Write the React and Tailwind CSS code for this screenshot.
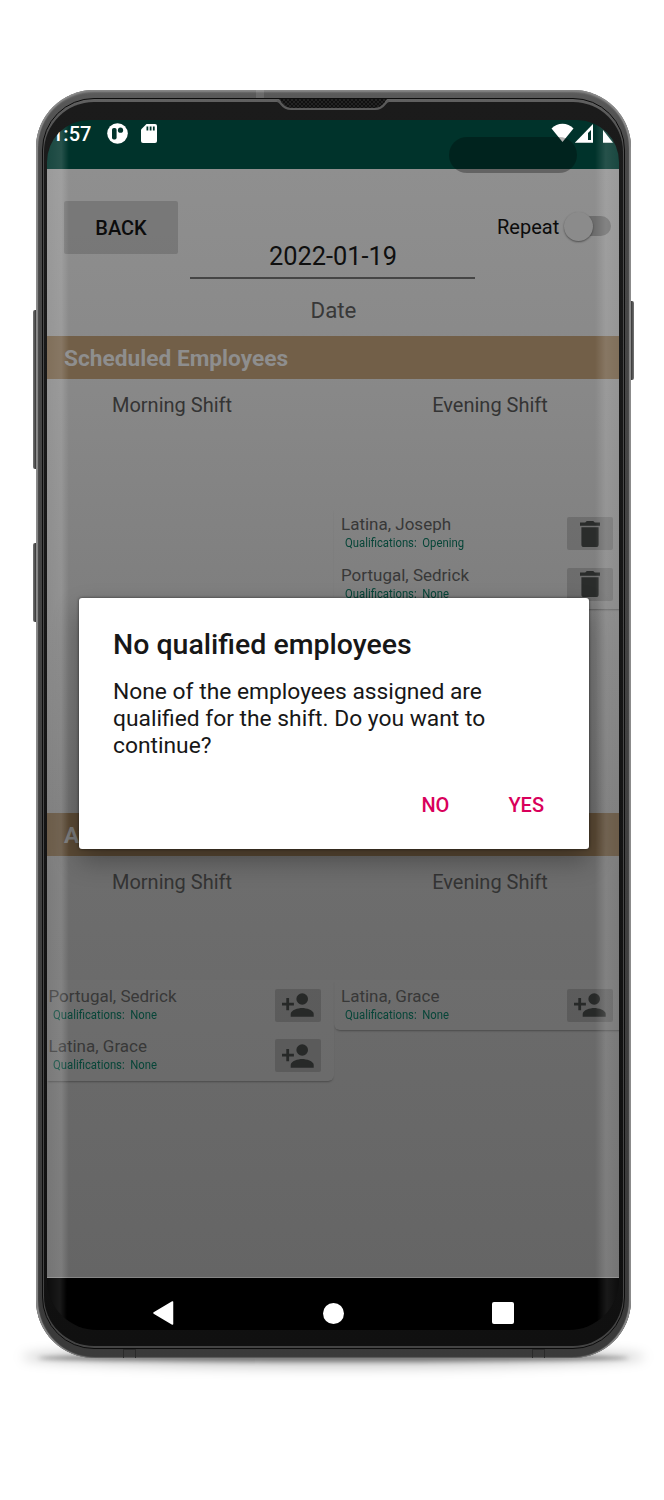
import React from "react";

function TrashIcon() {
  return (
    <svg viewBox="0 0 20 26" className="h-[26px] w-5" fill="#2a2c2b">
      <path d="M0 1.6h5.2L6.8 0h6.4l1.6 1.6H20v3.1H0zM1.4 6.2h17.2v17.2a2.6 2.6 0 0 1-2.6 2.6H4a2.6 2.6 0 0 1-2.6-2.6z" />
    </svg>
  );
}

function AddPersonIcon() {
  return (
    <svg viewBox="0 0 32 24" className="h-6 w-8" fill="#272928">
      <path d="M4.3 4.9h2.8v4.8h4.8v2.8H7.1v4.8H4.3v-4.8H0V9.700h4.300z" />
      <circle cx="20.200" cy="6" r="5.800" />
      <path d="M8.700 23.700v-2.800c0-4 7.600-6 11.500-6s11.500 2 11.500 6v2.800z" />
    </svg>
  );
}

function Employee({ name, qualification, kind }) {
  return (
    <div className="flex h-[50.7px] items-start justify-between">
      <div className="pt-[6px]">
        <div className="h-[21px] text-[17px] leading-[21px] text-[#383838]">{name}</div>
        <div className="ml-1 origin-left scale-x-[0.942] text-[12px] leading-4 whitespace-pre text-[#064538]">{"Qualifications:  " + qualification}</div>
      </div>
      <div className="mt-[9px] flex h-[33px] w-[46px] items-center justify-center rounded-[2px] bg-black/15">
        {kind === "trash" ? <TrashIcon /> : <AddPersonIcon />}
      </div>
    </div>
  );
}

function Banner({ children, dim }) {
  return (
    <div className={"flex h-[43px] items-center pl-[17px] text-[22.7px] leading-[43px] font-bold " + (dim ? "bg-[#5b4a35] text-[#7b7b7b]" : "bg-[#725f48] text-[#8e8e8e]")}>
      <span className="pt-[2px]">{children}</span>
    </div>
  );
}

function ShiftTitles() {
  return (
    <div className="flex h-[52px] text-center text-[20px] leading-[52px] text-[#343434]">
      <div className="w-[250px]">Morning Shift</div>
      <div className="ml-[68px] w-[250px]">Evening Shift</div>
    </div>
  );
}

function StatusBar() {
  return (
    <div className="flex h-[49px] items-start bg-[#00332b] text-white">
      <span className="ml-[5px] mt-[2px] w-[55px] text-[20px] leading-6 font-medium">1:57</span>
      <svg viewBox="0 0 21 21" className="mt-[3px] h-[21px] w-[21px]">
        <circle cx="10.500" cy="10.500" r="10.300" fill="#fff" />
        <rect x="5" y="5" width="4.600" height="11.500" rx="1.800" fill="#00332b" />
        <circle cx="13.500" cy="7.200" r="2.600" fill="#00332b" />
      </svg>
      <svg viewBox="0 0 16 19" className="ml-[13px] mt-[4px] h-[19px] w-4">
        <path d="M5.500 0H14a2 2 0 0 1 2 2v15a2 2 0 0 1-2 2H2a2 2 0 0 1-2-2V5.500z" fill="#fff" />
        <path d="M5.500 2.500h1.800v4H5.500zM8.700 2.500h1.800v4H8.700zM11.900 2.500h1.800v4h-1.800z" fill="#00332b" />
      </svg>
      <svg viewBox="0 0 68 20" className="ml-auto h-5 w-[68px] mt-[3px]">
        <path d="M0.500 5.500C6-0.800 17-0.800 22.500 5.500L11.500 19z" fill="#fff" />
        <path d="M23.800 19.800 42 1v18.800z" fill="#fff" />
        <path d="M37 10l3-3v10h-3z" fill="#00332b" />
        <path d="M52 7l10 12.800H52z" fill="#fff" />
      </svg>
    </div>
  );
}

function ScheduleHeader() {
  return (
    <div className="flex h-[167px] items-start pl-[17px]">
      <button className="mt-8 h-[53px] w-[114px] rounded-[2px] bg-black/15 text-[20px] font-medium text-[#0c0c0c]">BACK</button>
      <div className="ml-3 w-[285px] text-center">
        <div className="mt-[65px] h-[45px] border-b-2 border-[#454545] pl-[1px] text-[25.400px] leading-[44px] text-[#0f0f0f]">2022-01-19</div>
        <div className="pt-[15px] pl-[2px] text-[22.3px] leading-[32px] text-[#383838]">Date</div>
      </div>
      <div className="ml-[22px] mt-[43px] flex h-7 items-center">
        <span className="w-[67px] pt-px text-[20px] leading-7 text-[#0c0c0c]">Repeat</span>
        <div className="flex h-5 w-[47px] items-center rounded-full bg-linear-to-r from-transparent from-30% to-[#6d6d6d] to-30%">
          <div className="h-[29px] w-[29px] shrink-0 rounded-full bg-[#8b8b8b] shadow-[0_1px_2px_rgba(0,0,0,0.45)]" />
        </div>
      </div>
    </div>
  );
}

function Dialog() {
  return (
    <div className="absolute left-[32px] top-[478px] flex h-[251px] w-[510px] flex-col rounded-[3px] bg-white pl-[34px] shadow-[0_12px_26px_rgba(0,0,0,0.32),0_0_3px_rgba(0,0,0,0.6)]">
      <h2 className="pt-[29px] text-[28.5px] leading-9 font-medium text-[#171717]">No qualified employees</h2>
      <p className="pt-[15px] text-[22.8px] leading-[27px] text-[#171717]">
        None of the employees assigned are
        <br />
        qualified for the shift. Do you want to
        <br />
        continue?
      </p>
      <div className="mt-[32px] flex justify-end gap-[59px] pr-[45px] text-[20px] leading-7 font-medium text-[#d9005b]">
        <button>NO</button>
        <button>YES</button>
      </div>
    </div>
  );
}

function NavBar() {
  return (
    <div className="flex h-[52px] items-start bg-black pt-[23px]">
      <svg viewBox="0 0 21 24" className="ml-[106px] h-6 w-[21px]"><path d="M19.500 1v22L1 12z" fill="#fff" stroke="#fff" strokeWidth="1.500" strokeLinejoin="round" /></svg>
      <div className="ml-[149px] mt-[2px] h-[21px] w-[21px] rounded-full bg-white" />
      <div className="ml-[148px] mt-[1px] h-[22px] w-[22px] rounded-[2px] bg-white" />
    </div>
  );
}

function Screen() {
  return (
    <div className="relative flex h-[1210px] w-[572px] flex-col overflow-hidden rounded-t-[42px] rounded-b-[50px]">
      <StatusBar />
      <div className="flex h-[1109px] flex-col border-b border-[#858585] bg-[linear-gradient(to_bottom,#8f8f8f_0%,#888_20%,#7f7f7f_38%,#6d6d6d_64%,#656565_100%)]">
        <ScheduleHeader />
        <Banner>Scheduled Employees</Banner>
        <ShiftTitles />
        <div className="flex h-[382px] items-start pt-[77px]">
          <div className="ml-[287px] w-[292px] shrink-0 rounded-bl-md pr-[13px] pl-[7px] shadow-[0_2px_2px_-1px_rgba(0,0,0,0.3)]">
            <Employee name="Latina, Joseph" qualification="Opening" kind="trash" />
            <Employee name="Portugal, Sedrick" qualification="None" kind="trash" />
          </div>
        </div>
        <Banner dim>Available Employees</Banner>
        <ShiftTitles />
        <div className="flex items-start pt-[71.5px]">
          <div className="w-[287px] shrink-0 rounded-br-md bg-white/[0.02] pr-[13px] pl-[1.5px] shadow-[0_2px_2px_-1px_rgba(0,0,0,0.3)]">
            <Employee name="Portugal, Sedrick" qualification="None" kind="add" />
            <Employee name="Latina, Grace" qualification="None" kind="add" />
          </div>
          <div className="w-[292px] shrink-0 rounded-bl-md bg-white/[0.02] pr-[13px] pl-[7px] shadow-[0_2px_2px_-1px_rgba(0,0,0,0.3)]">
            <Employee name="Latina, Grace" qualification="None" kind="add" />
          </div>
        </div>
      </div>
      <NavBar />
      <div className="pointer-events-none absolute top-0 bottom-[52px] left-0 w-[22px] bg-linear-to-r from-white/10 via-white/15 via-65% to-transparent" />
      <div className="pointer-events-none absolute top-0 right-0 bottom-[52px] w-[24px] bg-linear-to-l from-white/10 via-white/15 via-55% to-transparent" />
      <div className="pointer-events-none absolute bottom-0 left-0 h-[52px] w-[20px] bg-linear-to-r from-white/5 via-white/10 via-65% to-transparent" />
      <div className="pointer-events-none absolute right-0 bottom-0 h-[52px] w-[22px] bg-linear-to-l from-white/5 via-white/10 via-55% to-transparent" />
      <div className="absolute left-[402px] top-[17px] h-9 w-[128px] rounded-full bg-black/30" />
      <Dialog />
    </div>
  );
}

function Speaker() {
  return (
    <svg viewBox="0 0 112 14" className="absolute left-[241px] top-[7px] h-[14px] w-[112px]">
      <defs>
        <pattern id="mesh" width="4" height="4" patternUnits="userSpaceOnUse">
          <rect width="4" height="4" fill="#101010" />
          <circle cx="1" cy="1" r="0.800" fill="#3a3a3a" />
          <circle cx="3" cy="3" r="0.800" fill="#3a3a3a" />
        </pattern>
      </defs>
      <path d="M1 2c4 0 3 10 13 10h84c10 0 9-10 13-10z" fill="url(#mesh)" />
      <path d="M0 4c5 0 4 8 14 8h84c10 0 9-8 14-8" fill="none" stroke="#5a5a5a" strokeWidth="2.200" />
    </svg>
  );
}

export default function App() {
  return (
    <div className="h-[1500px] w-[664px] overflow-hidden bg-white pl-9 pt-[90px] font-[Roboto,sans-serif]">
      <div className="relative h-[1268px] w-[595px]">
        <div className="absolute -bottom-[10px] -left-[14px] h-[22px] w-[623px] rounded-[50%] bg-black/20 blur-[6px]" />
        <div className="absolute -bottom-[4px] left-[2px] h-[8px] w-[591px] rounded-[50%] bg-black/40 blur-[2px]" />
        <div className="absolute -left-[3px] top-[220px] h-[159px] w-1 rounded-l-[2px] bg-linear-to-r from-[#777] to-[#222]" />
        <div className="absolute -left-[3px] top-[453px] h-[79px] w-1 rounded-l-[2px] bg-linear-to-r from-[#777] to-[#222]" />
        <div className="absolute -right-[3px] top-[211px] h-[79px] w-1 rounded-r-[2px] bg-linear-to-l from-[#777] to-[#222]" />
        <div className="relative h-full rounded-[58px] bg-linear-to-b from-[#5b5b5b] via-[#484848] via-5% to-[#3a3a3a] px-[6px] pt-2 pb-[9px] shadow-[inset_2px_0_1px_#8b8b8b,inset_-2px_0_1px_#8b8b8b,inset_0_2px_2px_#8a8a8a,inset_0_-1px_1px_#555]">
          <div className="absolute left-[220px] top-0 h-2 w-2 bg-white/10" />
          <div className="absolute bottom-0 left-[87px] h-[9px] w-[13px] border-x border-t border-[#2a2a2a]" />
          <div className="absolute bottom-0 right-[86px] h-[9px] w-[13px] border-x border-t border-[#2a2a2a]" />
          <div className="h-full rounded-[52px] border border-[#0c0c0c] bg-linear-to-b from-[#606060] via-[#4a4a4a] via-5% to-[#444] px-px pt-[3px] pb-[2px]">
            <div className="h-full rounded-[50px] bg-linear-to-b from-[#1b1b1b] to-[#101010] pl-[3px] pt-[18px]">
              <Screen />
            </div>
          </div>
          <Speaker />
        </div>
      </div>
    </div>
  );
}
